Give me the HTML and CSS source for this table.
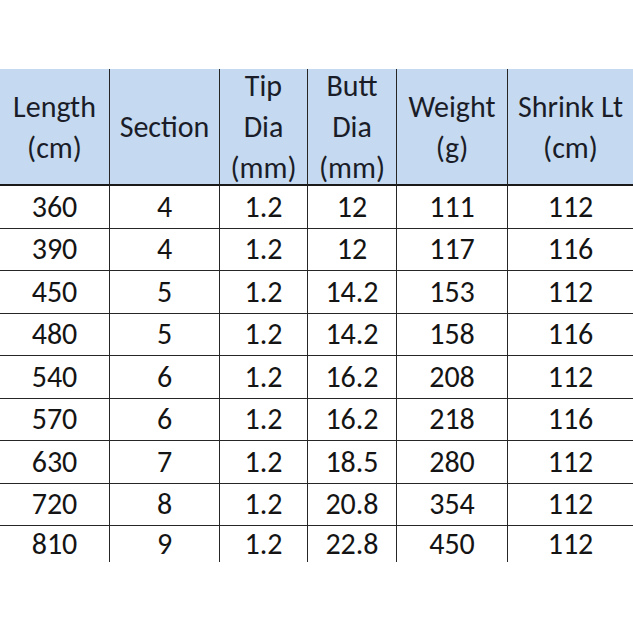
FILE: index.html
```html
<!DOCTYPE html>
<html>
<head>
<meta charset="utf-8">
<link rel="stylesheet" href="styles.css">
</head>
<body>
<div class="sheet">
  <div class="grid">
    <div class="cell head">Length<br>(cm)</div>
    <div class="cell head">Section</div>
    <div class="cell head">Tip<br>Dia<br>(mm)</div>
    <div class="cell head">Butt<br>Dia<br>(mm)</div>
    <div class="cell head">Weight<br>(g)</div>
    <div class="cell head last">Shrink Lt<br>(cm)</div>

    <div class="cell">360</div><div class="cell">4</div><div class="cell">1.2</div><div class="cell">12</div><div class="cell">111</div><div class="cell last">112</div>
    <div class="cell">390</div><div class="cell">4</div><div class="cell">1.2</div><div class="cell">12</div><div class="cell">117</div><div class="cell last">116</div>
    <div class="cell">450</div><div class="cell">5</div><div class="cell">1.2</div><div class="cell">14.2</div><div class="cell">153</div><div class="cell last">112</div>
    <div class="cell">480</div><div class="cell">5</div><div class="cell">1.2</div><div class="cell">14.2</div><div class="cell">158</div><div class="cell last">116</div>
    <div class="cell">540</div><div class="cell">6</div><div class="cell">1.2</div><div class="cell">16.2</div><div class="cell">208</div><div class="cell last">112</div>
    <div class="cell">570</div><div class="cell">6</div><div class="cell">1.2</div><div class="cell">16.2</div><div class="cell">218</div><div class="cell last">116</div>
    <div class="cell">630</div><div class="cell">7</div><div class="cell">1.2</div><div class="cell">18.5</div><div class="cell">280</div><div class="cell last">112</div>
    <div class="cell">720</div><div class="cell">8</div><div class="cell">1.2</div><div class="cell">20.8</div><div class="cell">354</div><div class="cell last">112</div>
    <div class="cell end">810</div><div class="cell end">9</div><div class="cell end">1.2</div><div class="cell end">22.8</div><div class="cell end">450</div><div class="cell end last">112</div>
  </div>
</div>
</body>
</html>
```

FILE: styles.css
```css
html, body {
  margin: 0;
  padding: 0;
  background: #ffffff;
  overflow: hidden;
}

.sheet {
  width: 633px;
  height: 633px;
  padding-top: 69px;
  box-sizing: border-box;
  font-family: "Carlito", "Lato", sans-serif;
  color: #141414;
}

.grid {
  display: grid;
  grid-template-columns: 110px 110px 88px 89px 111px 125px;
  grid-template-rows: 117px repeat(8, 42.5px) 36px;
}

.cell {
  box-sizing: border-box;
  border-right: 1px solid #262626;
  border-bottom: 1px solid #262626;
  display: flex;
  align-items: center;
  justify-content: center;
  text-align: center;
  font-size: 30px;
  line-height: 1;
  white-space: nowrap;
}

.cell.head {
  background: #c5d9f1;
  border-bottom: 2px solid #1a1a1a;
  line-height: 41px;
  color: #1a1d28;
}

.cell.last {
  border-right: none;
}

.cell.end {
  border-bottom: none;
}
```
